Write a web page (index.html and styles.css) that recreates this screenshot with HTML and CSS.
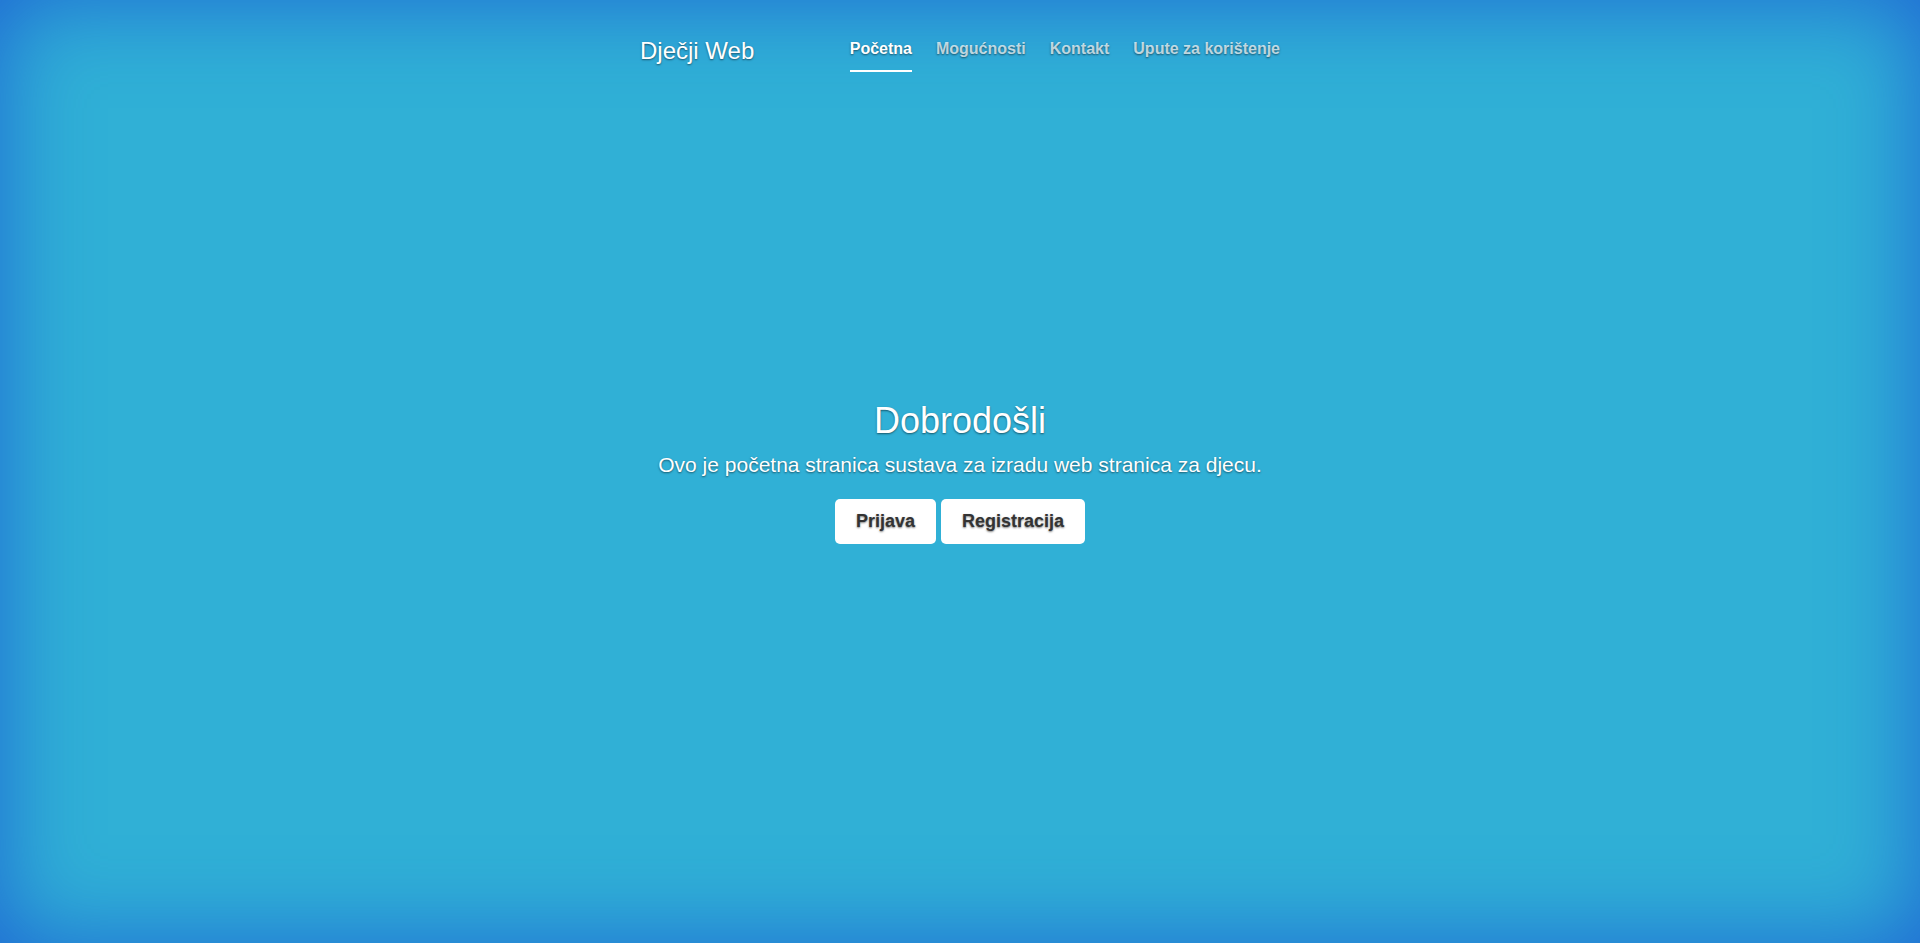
FILE: index.html
```html
<!DOCTYPE html>
<html lang="hr">
<head>
<meta charset="utf-8">
<title>Dječji Web</title>
<link rel="stylesheet" href="styles.css">
</head>
<body>
<div class="cover">
  <header class="masthead">
    <div class="brand">Dječji Web</div>
    <nav class="nav">
      <a class="nav-link active" href="#">Početna</a>
      <a class="nav-link" href="#">Mogućnosti</a>
      <a class="nav-link" href="#">Kontakt</a>
      <a class="nav-link" href="#">Upute za korištenje</a>
    </nav>
  </header>
  <main class="hero">
    <h1 class="hero-title">Dobrodošli</h1>
    <p class="lead">Ovo je početna stranica sustava za izradu web stranica za djecu.</p>
    <div class="actions">
      <a class="btn" href="#">Prijava</a>
      <a class="btn" href="#">Registracija</a>
    </div>
  </main>
  <footer class="footer-spacer"></footer>
</div>
</body>
</html>
```
FILE: styles.css
```css
html, body {
  margin: 0;
  height: 100%;
}
body {
  background: #30b0d6;
  box-shadow: inset 0 0 90px #1f66d4;
  font-family: "Liberation Sans", Arial, sans-serif;
  color: #fff;
  text-shadow: 0 1px 2px rgba(0, 0, 0, .5);
  overflow: hidden;
}
.cover {
  width: 640px;
  height: 100%;
  margin: 0 auto;
  display: grid;
  grid-template-rows: 80px 1fr 80px;
}
.masthead {
  display: flex;
  justify-content: space-between;
  align-items: flex-start;
  padding-top: 33px;
}
.brand {
  font-size: 24px;
  line-height: 36px;
}
.nav {
  display: flex;
  gap: 24px;
  padding-top: 4px;
}
.nav-link {
  font-size: 16px;
  font-weight: 700;
  line-height: 24px;
  padding-bottom: 9px;
  border-bottom: 2px solid transparent;
  color: rgba(255, 255, 255, .72);
  text-decoration: none;
}
.nav-link.active {
  color: #fff;
  border-bottom-color: #fff;
}
.hero {
  display: flex;
  flex-direction: column;
  align-items: center;
  justify-content: center;
  text-align: center;
}
.hero-title {
  margin: 0;
  font-size: 36px;
  font-weight: 400;
  line-height: 43px;
}
.lead {
  margin: 8px 0 19px;
  font-size: 21px;
  line-height: 30px;
}
.actions {
  display: flex;
  gap: 5px;
}
.btn {
  display: block;
  background: #fff;
  color: #333;
  font-size: 18px;
  font-weight: 700;
  line-height: 27px;
  padding: 9px 21px;
  border-radius: 5px;
  text-decoration: none;
}
.footer-spacer {
  height: 80px;
}
```
